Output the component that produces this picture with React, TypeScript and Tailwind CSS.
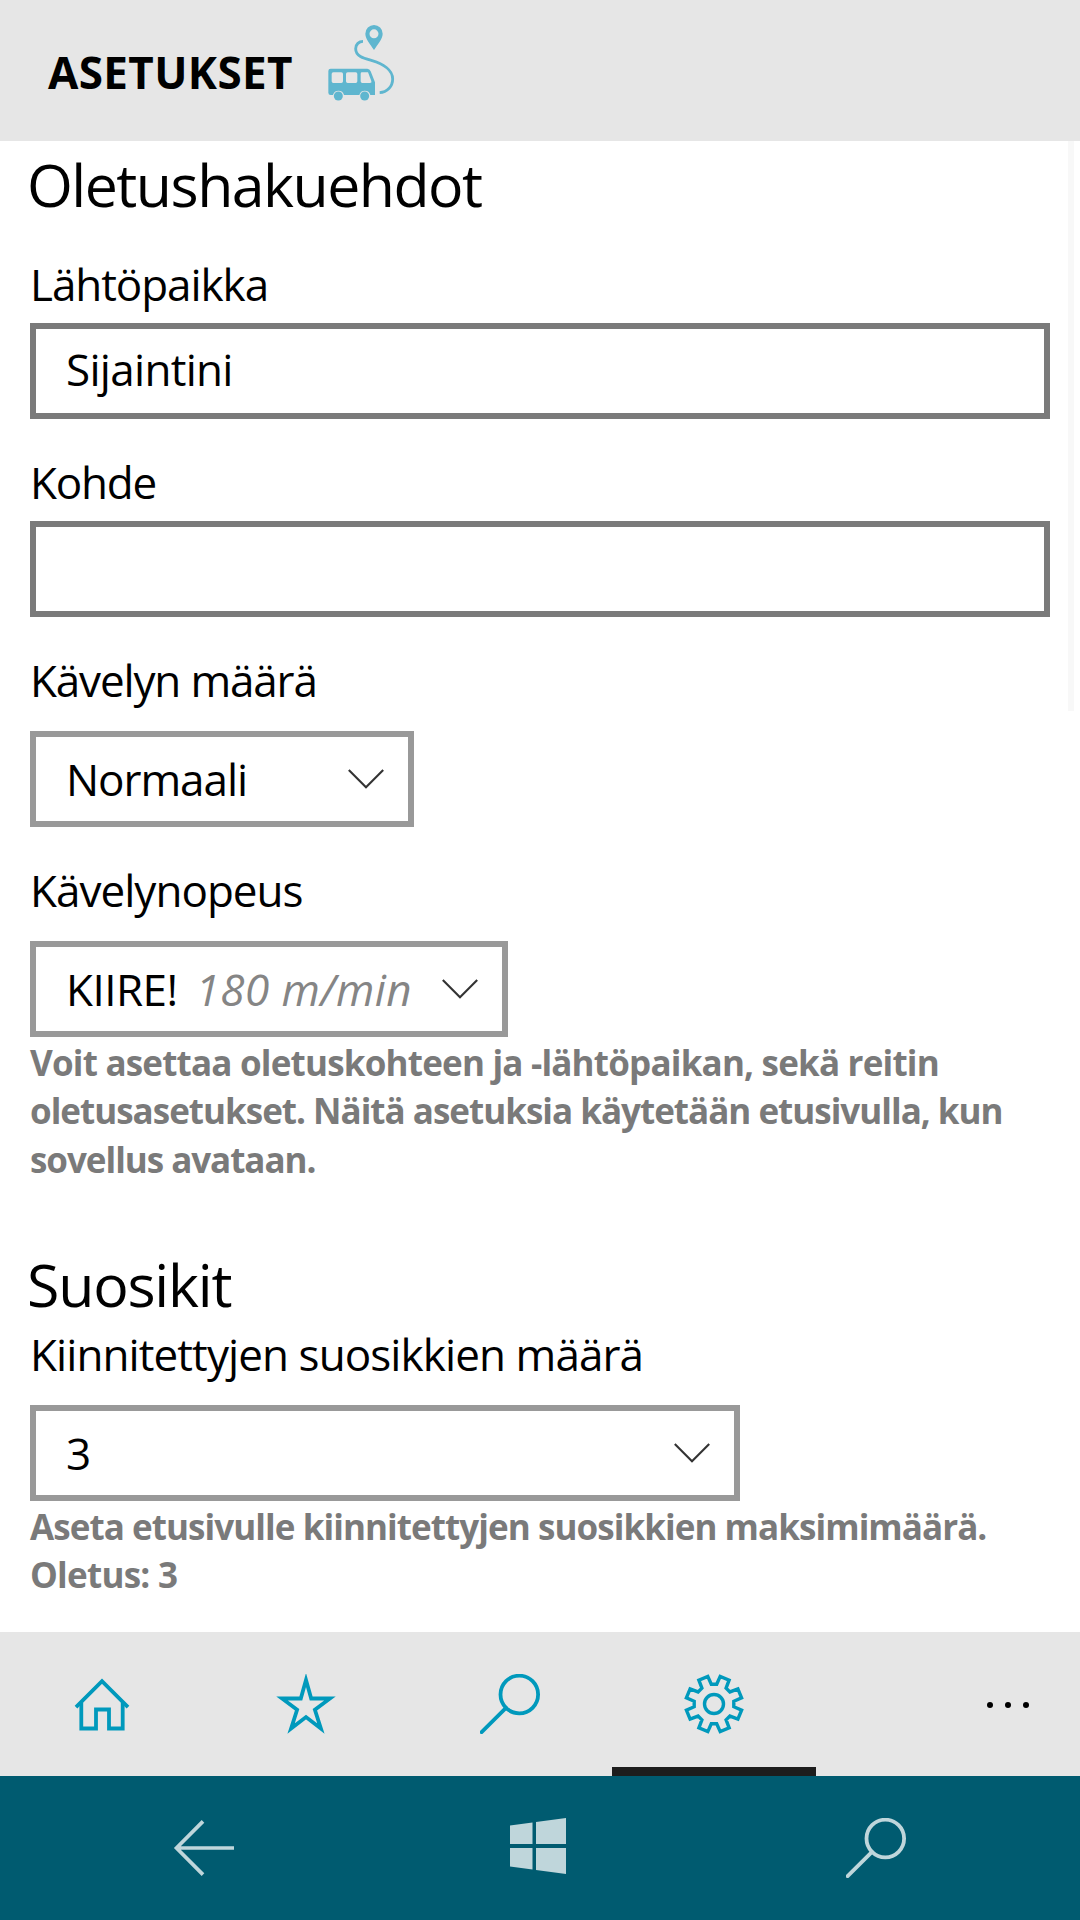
import type { ReactNode } from "react";

const ACCENT = "#0099bc";
const NAV = "#bfd6db";

function RouteBusIcon() {
  return (
    <svg className="h-[110px] w-[120px]" viewBox="0 0 360 330" fill="none">
      <path
        fill="#5fb6cf"
        fillRule="evenodd"
        d="M222 45a26 26 0 0 0-26 26c0 17 15 31 26 49c11-18 26-32 26-49a26 26 0 0 0-26-26zm0 13a13 13 0 1 1 0 27a13 13 0 1 1 0-27z"
      />
      <path
        stroke="#5fb6cf"
        strokeWidth="8.5"
        d="M189 94C177 94 167 103 167 116C167 139 192 145 214 151C249 161 278 180 278 207C278 230 261 247 239 248"
      />
      <path
        fill="#5fb6cf"
        fillRule="evenodd"
        d="M92 176H202Q209 176 212 184L225 217V255H211A17 17 0 0 0 178 255H132A17 17 0 0 0 99 255H92Q85 255 85 248V183Q85 176 92 176zM100 187Q95 187 95 192V214Q95 219 100 219H124Q129 219 129 214V192Q129 187 124 187zM143 187Q138 187 138 192V214Q138 219 143 219H167Q172 219 172 214V192Q172 187 167 187zM186 187Q182 187 182 191V214Q182 219 187 219H210Q216 219 214 213L204 187z"
      />
      <circle cx="115" cy="258" r="13.5" fill="#5fb6cf" />
      <circle cx="194" cy="258" r="13.5" fill="#5fb6cf" />
    </svg>
  );
}

function HomeIcon() {
  return (
    <svg className="size-[60px]" viewBox="0 0 60 60" fill="none" stroke={ACCENT} strokeWidth="3.8">
      <path d="M4 33.2L30 7.2L56 33.2" />
      <path d="M9.3 28.5V54.5H24V35.5H37V54.5H50.7V28.5" />
    </svg>
  );
}

function StarIcon() {
  return (
    <svg className="size-[60px]" viewBox="0 0 60 60" fill="none" stroke={ACCENT} strokeWidth="3.8" strokeMiterlimit="10">
      <path d="M30 6L35.2 24.5H54L38.9 35.8L44.9 54.6L30 43.1L15.1 54.6L21.1 35.8L6 24.5H24.8Z" />
    </svg>
  );
}

function SearchIcon({ color }: { color: string }) {
  return (
    <svg className="size-[60px]" viewBox="0 0 60 60" fill="none" stroke={color} strokeWidth="3.8">
      <circle cx="39.3" cy="20.5" r="18.8" />
      <path d="M26 33.8L1.6 58.2" strokeLinecap="round" />
    </svg>
  );
}

const TOOTH: [number, number][] = [
  [-2.7, -19.8],
  [2.7, -19.8],
  [6.2, -27.6],
  [15.1, -23.9],
];

function GearIcon() {
  const points = Array.from({ length: 8 }, (_, k) => {
    const a = (k * Math.PI) / 4;
    return TOOTH.map(([x, y]) => `${x * Math.cos(a) - y * Math.sin(a)},${x * Math.sin(a) + y * Math.cos(a)}`).join(" ");
  }).join(" ");
  return (
    <svg className="size-[60px]" viewBox="-30 -30 60 60" fill="none" stroke={ACCENT} strokeWidth="3.4">
      <polygon points={points} />
      <circle r="9.5" />
    </svg>
  );
}

function BackIcon() {
  return (
    <svg className="h-[60px] w-[62px]" viewBox="0 0 62 60" fill="none" stroke={NAV} strokeWidth="3.7">
      <path d="M30 3.4L3.5 30L30 56.6M3.5 30H61" />
    </svg>
  );
}

function WindowsIcon() {
  return (
    <svg className="size-[56px]" viewBox="0 0 56 56" fill={NAV}>
      <path d="M0 7.5L22.5 4.6V26H0zM26 4L56 0V26H26zM0 30H22.5V51.5L0 48.6zM26 30H56V56L26 52z" />
    </svg>
  );
}

function Chevron() {
  return (
    <svg className="mb-px h-[20px] w-[36px]" viewBox="0 0 36 20" fill="none" stroke="#333" strokeWidth="2.1">
      <path d="M.8 1L18 18.2L35.2 1" />
    </svg>
  );
}

function Label({ children, className }: { children: ReactNode; className: string }) {
  return <div className={`h-[60px] pl-[30px] text-[44px] leading-[62px] whitespace-nowrap ${className}`}>{children}</div>;
}

function TextBox({ children }: { children?: ReactNode }) {
  return (
    <div className="mx-[30px] mt-[10px] flex h-[96px] items-center border-6 border-[#7a7a7a] pb-[4px] pl-[30px] text-[44px] leading-[60px] tracking-[-0.7px]">
      {children}
    </div>
  );
}

function Select({ children, className }: { children: ReactNode; className: string }) {
  return (
    <div className={`ml-[30px] flex h-[96px] items-center justify-between border-6 border-[#999] pr-[24px] pl-[30px] text-[44px] leading-[60px] ${className}`}>
      <div className="whitespace-pre">{children}</div>
      <Chevron />
    </div>
  );
}

function Help({ children }: { children: ReactNode }) {
  return <div className="h-[146px] pt-[2px] pl-[30px] text-[35px] leading-[48.4px] font-bold whitespace-nowrap text-[#7a7a7a]">{children}</div>;
}

function Tab({ children, active = false }: { children: ReactNode; active?: boolean }) {
  return (
    <div className="flex h-full w-[204px] flex-col items-center justify-between pt-[42px]">
      {children}
      {active && <div className="h-[9px] w-full bg-[#1d1d1d]" />}
    </div>
  );
}

export default function App() {
  return (
    <div className="flex h-[1920px] w-[1080px] flex-col overflow-hidden bg-white font-['Open_Sans',sans-serif] text-black">
      <header className="flex h-[141px] shrink-0 bg-[#e6e6e6] pt-[10px] pl-[48px]">
        <h1 className="w-[252px] pt-[32px] text-[44px] leading-[60px] font-bold tracking-[0.37px] whitespace-nowrap">ASETUKSET</h1>
        <RouteBusIcon />
      </header>

      <div className="flex h-[1491px] shrink-0">
        <main className="w-[1080px] shrink-0">
          <h2 className="mt-[3px] h-[80px] pl-[27px] text-[59px] leading-[80px] tracking-[-1.52px]">Oletushakuehdot</h2>
          <Label className="mt-[29px] tracking-[-1.06px]">Lähtöpaikka</Label>
          <TextBox>Sijaintini</TextBox>
          <Label className="mt-[32px] tracking-[-1.2px]">Kohde</Label>
          <TextBox />
          <Label className="mt-[32px] tracking-[-1.15px]">Kävelyn määrä</Label>
          <Select className="mt-[22px] w-[384px] tracking-[-1.05px]">Normaali</Select>
          <Label className="mt-[32px] tracking-[-0.97px]">Kävelynopeus</Label>
          <Select className="mt-[22px] w-[478px]">
            <span className="tracking-[-0.53px]">KIIRE!</span>
            <i className="ml-[18px] tracking-[0.42px] text-[#858585]">180 m/min</i>
          </Select>
          <Help>
            <div className="tracking-[-0.8px]">Voit asettaa oletuskohteen ja -lähtöpaikan, sekä reitin</div>
            <div className="tracking-[-1px]">oletusasetukset. Näitä asetuksia käytetään etusivulla, kun</div>
            <div className="tracking-[-1.04px]">sovellus avataan.</div>
          </Help>
          <h2 className="mt-[61px] h-[80px] pl-[27px] text-[59px] leading-[80px] tracking-[-1.2px]">Suosikit</h2>
          <Label className="-mt-px tracking-[-0.91px]">Kiinnitettyjen suosikkien määrä</Label>
          <Select className="mt-[22px] w-[710px]">3</Select>
          <Help>
            <div className="tracking-[-0.94px]">Aseta etusivulle kiinnitettyjen suosikkien maksimimäärä.</div>
            <div className="tracking-[-0.75px]">Oletus: 3</div>
          </Help>
        </main>
        <div className="-ml-[12px] h-[570px] w-[6px] shrink-0 bg-[#f8f8f8]" />
      </div>

      <nav className="flex h-[144px] shrink-0 bg-[#e6e6e6]">
        <Tab><HomeIcon /></Tab>
        <Tab><StarIcon /></Tab>
        <Tab><SearchIcon color={ACCENT} /></Tab>
        <Tab active><GearIcon /></Tab>
        <div className="flex flex-1 justify-end gap-[12px] pt-[70px] pr-[51px]">
          <div className="size-[6px] rounded-full bg-black" />
          <div className="size-[6px] rounded-full bg-black" />
          <div className="size-[6px] rounded-full bg-black" />
        </div>
      </nav>

      <footer className="flex h-[144px] shrink-0 items-start bg-[#005b70] pt-[42px]">
        <div className="ml-[173px] w-[337px]"><BackIcon /></div>
        <div className="w-[336px]"><WindowsIcon /></div>
        <SearchIcon color={NAV} />
      </footer>
    </div>
  );
}
